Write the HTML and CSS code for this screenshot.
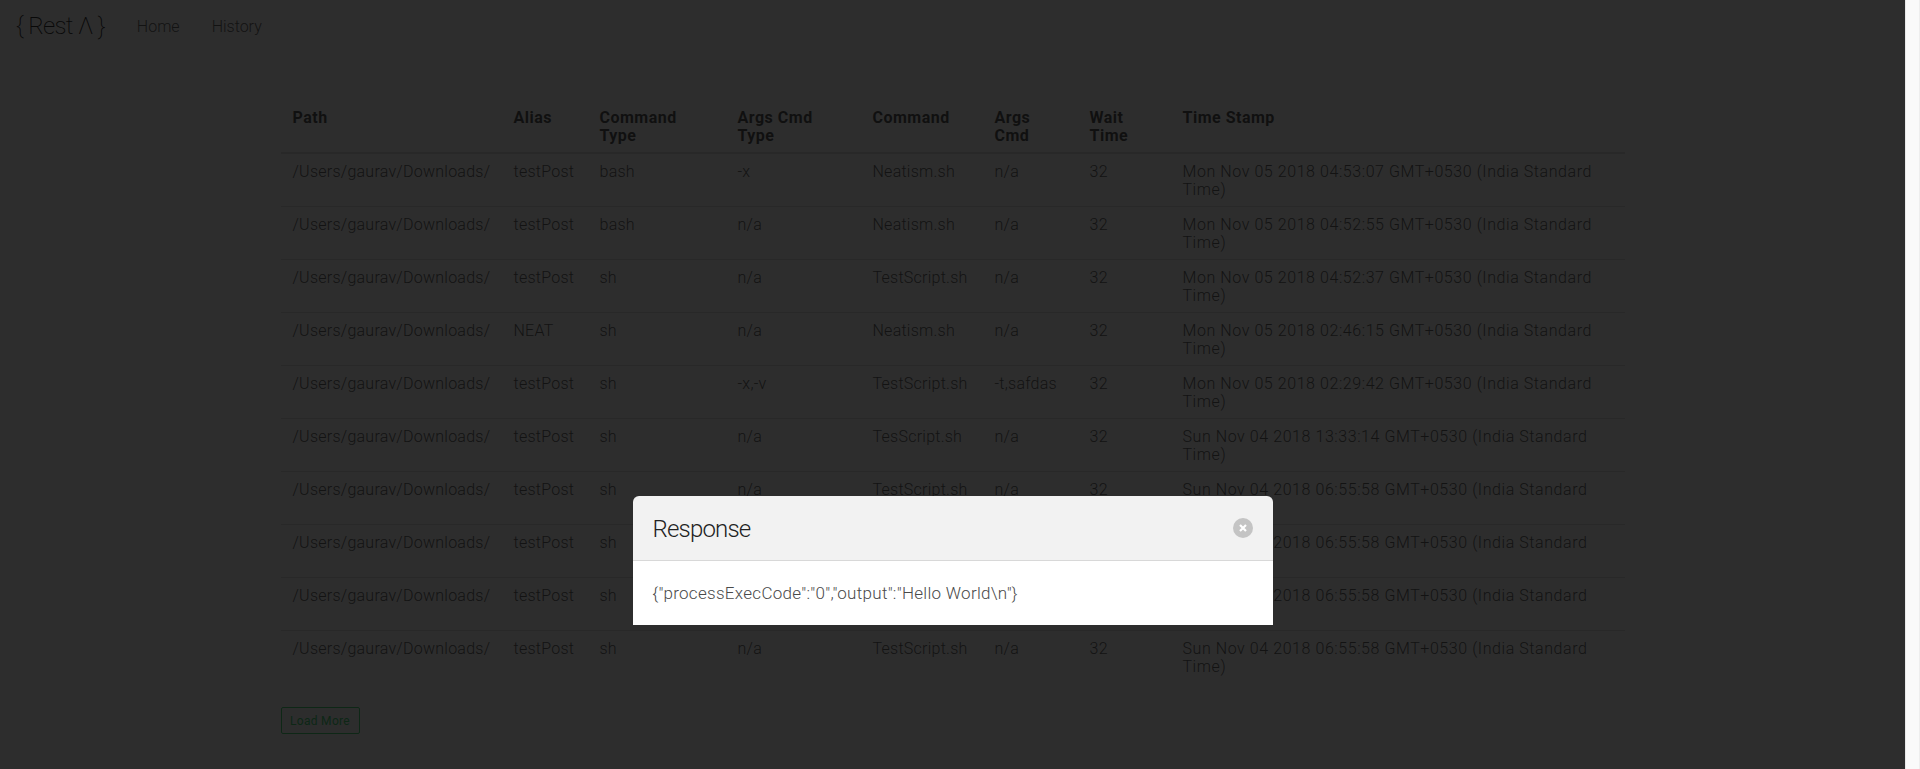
FILE: index.html

```html
<!DOCTYPE html>
<html lang="en">
<head>
  <meta charset="UTF-8" />
  <title>Rest Lambda</title>
  <link rel="stylesheet" href="styles.css">
</head>
<body>
  <div class="page">
    <nav class="navbar">
      <a class="brand">{ Rest Λ }</a>
      <a class="nav-link">Home</a>
      <a class="nav-link">History</a>
    </nav>

    <section class="container">
      <table class="history">
        <colgroup>
          <col class="col-path">
          <col class="col-alias">
          <col class="col-type">
          <col class="col-args-type">
          <col class="col-command">
          <col class="col-args">
          <col class="col-wait">
          <col>
        </colgroup>
        <thead>
          <tr>
            <th>Path</th>
            <th>Alias</th>
            <th>Command<br>Type</th>
            <th>Args Cmd<br>Type</th>
            <th>Command</th>
            <th>Args<br>Cmd</th>
            <th>Wait<br>Time</th>
            <th>Time Stamp</th>
          </tr>
        </thead>
        <tbody>
          <tr><td>/Users/gaurav/Downloads/</td><td>testPost</td><td>bash</td><td>-x</td><td>Neatism.sh</td><td>n/a</td><td>32</td><td class="stamp">Mon Nov 05 2018 04:53:07 GMT+0530 (India Standard Time)</td></tr>
          <tr><td>/Users/gaurav/Downloads/</td><td>testPost</td><td>bash</td><td>n/a</td><td>Neatism.sh</td><td>n/a</td><td>32</td><td class="stamp">Mon Nov 05 2018 04:52:55 GMT+0530 (India Standard Time)</td></tr>
          <tr><td>/Users/gaurav/Downloads/</td><td>testPost</td><td>sh</td><td>n/a</td><td>TestScript.sh</td><td>n/a</td><td>32</td><td class="stamp">Mon Nov 05 2018 04:52:37 GMT+0530 (India Standard Time)</td></tr>
          <tr><td>/Users/gaurav/Downloads/</td><td>NEAT</td><td>sh</td><td>n/a</td><td>Neatism.sh</td><td>n/a</td><td>32</td><td class="stamp">Mon Nov 05 2018 02:46:15 GMT+0530 (India Standard Time)</td></tr>
          <tr><td>/Users/gaurav/Downloads/</td><td>testPost</td><td>sh</td><td>-x,-v</td><td>TestScript.sh</td><td>-t,safdas</td><td>32</td><td class="stamp">Mon Nov 05 2018 02:29:42 GMT+0530 (India Standard Time)</td></tr>
          <tr><td>/Users/gaurav/Downloads/</td><td>testPost</td><td>sh</td><td>n/a</td><td>TesScript.sh</td><td>n/a</td><td>32</td><td class="stamp">Sun Nov 04 2018 13:33:14 GMT+0530 (India Standard Time)</td></tr>
          <tr><td>/Users/gaurav/Downloads/</td><td>testPost</td><td>sh</td><td>n/a</td><td>TestScript.sh</td><td>n/a</td><td>32</td><td class="stamp">Sun Nov 04 2018 06:55:58 GMT+0530 (India Standard Time)</td></tr>
          <tr><td>/Users/gaurav/Downloads/</td><td>testPost</td><td>sh</td><td>n/a</td><td>TestScript.sh</td><td>n/a</td><td>32</td><td class="stamp">Sun Nov 04 2018 06:55:58 GMT+0530 (India Standard Time)</td></tr>
          <tr><td>/Users/gaurav/Downloads/</td><td>testPost</td><td>sh</td><td>n/a</td><td>TestScript.sh</td><td>n/a</td><td>32</td><td class="stamp">Sun Nov 04 2018 06:55:58 GMT+0530 (India Standard Time)</td></tr>
          <tr><td>/Users/gaurav/Downloads/</td><td>testPost</td><td>sh</td><td>n/a</td><td>TestScript.sh</td><td>n/a</td><td>32</td><td class="stamp">Sun Nov 04 2018 06:55:58 GMT+0530 (India Standard Time)</td></tr>
        </tbody>
      </table>
      <button class="load-more">Load More</button>
    </section>

    <div class="modal">
      <div class="modal-background"></div>
      <div class="modal-card">
        <header class="modal-head">
          <p class="modal-title">Response</p>
          <button class="delete" aria-label="close">
            <svg viewBox="0 0 20 20" width="20" height="20"><circle cx="10" cy="10" r="10" fill="#c4c4c4"/><path d="M7 7l6 6M13 7l-6 6" stroke="#fff" stroke-width="2.2"/></svg>
          </button>
        </header>
        <div class="modal-body">{"processExecCode":"0","output":"Hello World\n"}</div>
      </div>
    </div>
  </div>
  <div class="scrollbar"></div>
</body>
</html>
```

FILE: styles.css

```css
html, body {
  margin: 0;
  height: 100%;
  overflow: hidden;
}
body {
  display: flex;
  font-family: Roboto, "Liberation Sans", sans-serif;
  font-size: 16px;
  font-weight: 300;
  color: #4a4a4a;
  background: #fff;
}
.page {
  position: relative;
  flex: 1;
  min-width: 0;
  overflow: hidden;
}
.scrollbar {
  width: 13px;
  flex: none;
  background: #fafafa;
  border-left: 1px solid #e8e8e8;
  border-right: 1px solid #eeeeee;
}
.navbar {
  display: flex;
  align-items: center;
  height: 52px;
}
.brand {
  font-size: 24px;
  font-weight: 200;
  letter-spacing: -0.7px;
  padding: 0 16px;
  color: #000;
}
.nav-link {
  padding: 0 16px;
  color: #4a4a4a;
}
.container {
  width: 1344px;
  margin: 48px auto 0;
}
.history {
  width: 100%;
  table-layout: fixed;
  border-collapse: collapse;
  line-height: 18px;
  letter-spacing: 0.25px;
}
.col-path { width: 221px; }
.col-alias { width: 86px; }
.col-type { width: 138px; }
.col-args-type { width: 135px; }
.col-command { width: 122px; }
.col-args { width: 95px; }
.col-wait { width: 93px; }
.history th {
  text-align: left;
  vertical-align: top;
  font-weight: 700;
  letter-spacing: 0.5px;
  color: #363636;
  padding: 9px 12px 7px;
  border-bottom: 2px solid #dbdbdb;
}
.history td {
  vertical-align: top;
  padding: 9px 12px 7px;
  border-bottom: 1px solid #dbdbdb;
}
.history td.stamp {
  letter-spacing: 0.57px;
}
.history tbody tr:last-child td {
  border-bottom: none;
}
.load-more {
  display: block;
  margin-top: 24px;
  padding: 0;
  width: 79px;
  height: 27px;
  font: 400 12px Roboto, sans-serif;
  letter-spacing: 0.3px;
  color: #23d160;
  background: #fff;
  border: 1px solid #23d160;
  border-radius: 2px;
}
.modal {
  position: absolute;
  inset: 0;
  display: flex;
  align-items: flex-start;
  justify-content: center;
}
.modal-background {
  position: absolute;
  inset: 0;
  background: rgba(10, 10, 10, 0.86);
}
.modal-card {
  position: relative;
  width: 640px;
  margin-top: 496px;
  border-radius: 6px 6px 0 0;
  overflow: hidden;
}
.modal-head {
  display: flex;
  align-items: center;
  justify-content: space-between;
  padding: 2px 20px 0;
  height: 65px;
  box-sizing: border-box;
  background: #f2f2f2;
  border-bottom: 1px solid #d8d8d8;
}
.modal-title {
  margin: 0;
  font-size: 24px;
  font-weight: 300;
  letter-spacing: -0.8px;
  color: #222;
}
.delete {
  width: 20px;
  height: 20px;
  margin-top: -3px;
  padding: 0;
  border: none;
  background: none;
  display: block;
}
.modal-body {
  background: #fff;
  padding: 20px;
  font-size: 17px;
  letter-spacing: 0.3px;
  line-height: 24px;
  height: 64px;
  box-sizing: border-box;
}
```
